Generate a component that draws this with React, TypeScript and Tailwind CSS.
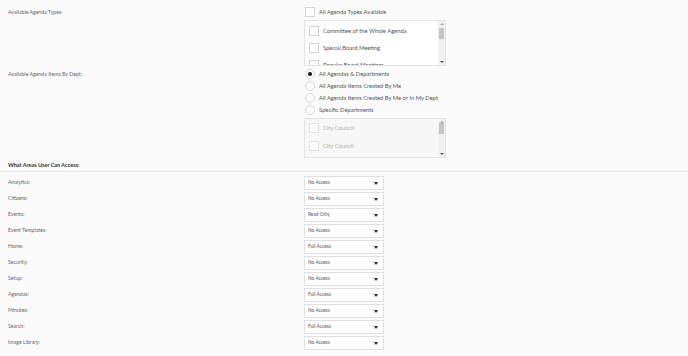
import React from "react";

const agendaTypes = ["Committee of the Whole Agenda", "Special Board Meeting", "Regular Board Meetings"];
const deptOptions = [
  "All Agendas & Departments",
  "All Agenda Items Created By Me",
  "All Agenda Items Created By Me or In My Dept",
  "Specific Departments",
];
const areas: [string, string][] = [
  ["Analytics:", "No Access"],
  ["Citizens:", "No Access"],
  ["Events:", "Read Only"],
  ["Event Templates:", "No Access"],
  ["Home:", "Full Access"],
  ["Security:", "No Access"],
  ["Setup:", "No Access"],
  ["Agendas:", "Full Access"],
  ["Minutes:", "No Access"],
  ["Search:", "Full Access"],
  ["Image Library:", "No Access"],
];

const Checkbox = ({ disabled }: { disabled?: boolean }) => (
  <span
    className={`block w-[10px] h-[10px] shrink-0 border ${
      disabled ? "border-[#e2e2e2] bg-[#fafafa]" : "border-[#d4d4d4] bg-white"
    }`}
  />
);

const Scrollbar = () => (
  <div className="w-[7px] h-full bg-[#f1f1f1] flex flex-col items-center justify-between py-[2px]">
    <span className="block w-0 h-0 border-l-[2px] border-r-[2px] border-b-[2px] border-l-transparent border-r-transparent border-b-[#a0a0a0]" />
    <span className="block w-[5px] h-[11px] bg-[#c5c5c5] -mt-[20px]" />
    <span className="block w-0 h-0 border-l-[2px] border-r-[2px] border-t-[2px] border-l-transparent border-r-transparent border-t-[#505050]" />
  </div>
);

const App = () => {
  return (
    <div
      className="w-[688px] h-[356px] overflow-hidden bg-[#fbfbfb] text-[#666]"
      style={{ fontFamily: 'Lato, "Open Sans", sans-serif' }}
    >
      {/* Agenda types */}
      <div className="flex pt-[7px]">
        <div className="w-[304px] shrink-0 pl-2 text-[5.2px] leading-[10px]">Available Agenda Types:</div>
        <div>
          <div className="flex items-center h-[10px] pl-[1px] gap-[4px]">
            <Checkbox />
            <span className="text-[5.8px] text-[#555]">All Agenda Types Available</span>
          </div>
          <div className="mt-[3px] w-[142px] h-[46px] border border-[#e3e3e3] bg-white flex overflow-hidden">
            <div className="flex-1 flex flex-col gap-[7px] pl-[4px] pt-[5px]">
              {agendaTypes.map((t) => (
                <div key={t} className="flex items-center gap-[4px] h-[10px] shrink-0">
                  <Checkbox />
                  <span className="text-[5.8px] text-[#555] whitespace-nowrap">{t}</span>
                </div>
              ))}
            </div>
            <Scrollbar />
          </div>
        </div>
      </div>

      {/* Agenda items by dept */}
      <div className="flex mt-[3px]">
        <div className="w-[304px] shrink-0 pl-2 text-[5.2px] leading-[10px]">Available Agenda Items By Dept:</div>
        <div>
          <div className="flex flex-col gap-[2px]">
            {deptOptions.map((o, i) => (
              <div key={o} className="flex items-center h-[10px] pl-[1px] gap-[4px]">
                <span className="w-[10px] h-[10px] rounded-full border border-[#d4d4d4] bg-white flex items-center justify-center shrink-0">
                  {i === 0 && <span className="w-[4px] h-[4px] rounded-full bg-[#111]" />}
                </span>
                <span className="text-[5.8px] text-[#555]">{o}</span>
              </div>
            ))}
          </div>
          <div className="mt-[3px] w-[142px] h-[40px] border border-[#e3e3e3] bg-[#f7f7f7] flex overflow-hidden">
            <div className="flex-1 flex flex-col gap-[8px] pl-[4px] pt-[4px]">
              {["City Council", "City Council"].map((t, i) => (
                <div key={i} className="flex items-center gap-[4px] h-[10px] shrink-0">
                  <Checkbox disabled />
                  <span className="text-[5.8px] text-[#b0b0b0]">{t}</span>
                </div>
              ))}
            </div>
            <Scrollbar />
          </div>
        </div>
      </div>

      {/* Access areas */}
      <div className="mt-[2px] pl-2 h-[11px] flex items-center text-[5.5px] font-bold text-[#333]">
        What Areas User Can Access:
      </div>
      <div className="border-t border-[#e6e6e6]" />
      <div className="flex flex-col gap-[2px] pt-[4px]">
        {areas.map(([label, value]) => (
          <div key={label} className="flex items-center h-[14px]">
            <div className="w-[304px] shrink-0 pl-2 text-[5.2px]">{label}</div>
            <div className="w-[80px] h-[14px] border border-[#e0e0e0] bg-white flex items-center justify-between pl-[3px] pr-[5px]">
              <span className="text-[4.8px] text-[#555]">{value}</span>
              <span className="block w-0 h-0 border-l-[2.5px] border-r-[2.5px] border-t-[3px] border-l-transparent border-r-transparent border-t-[#222]" />
            </div>
          </div>
        ))}
      </div>
    </div>
  );
};

export default App;
